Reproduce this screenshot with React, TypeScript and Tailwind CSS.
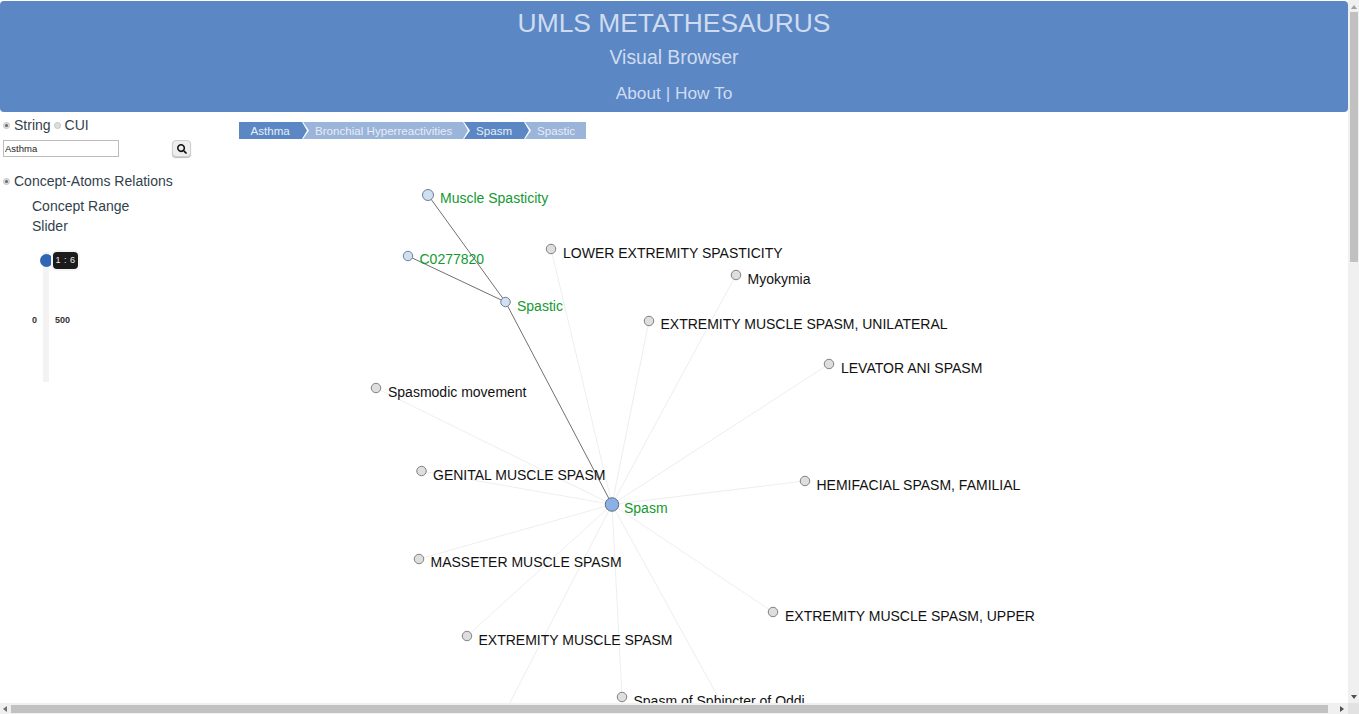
import React from "react";
import { FaSearch } from "react-icons/fa";

// graph data, coordinates are page pixels (svg viewBox lines up with the page)
const HUB = { x: 612, y: 504.5 };

type GraphNode = { label: string; x: number; y: number; tx: number; ty: number; picked?: boolean };

const nodes: GraphNode[] = [
  { label: "Muscle Spasticity", x: 428, y: 195, tx: 440, ty: 203, picked: true },
  { label: "C0277820", x: 408, y: 256, tx: 419.5, ty: 264, picked: true },
  { label: "Spastic", x: 505.5, y: 302, tx: 517, ty: 311, picked: true },
  { label: "LOWER EXTREMITY SPASTICITY", x: 551, y: 249, tx: 563, ty: 258 },
  { label: "Myokymia", x: 736, y: 275, tx: 747.5, ty: 284 },
  { label: "EXTREMITY MUSCLE SPASM, UNILATERAL", x: 649, y: 321, tx: 660.5, ty: 329 },
  { label: "LEVATOR ANI SPASM", x: 829, y: 364, tx: 841, ty: 373 },
  { label: "Spasmodic movement", x: 376, y: 388, tx: 388, ty: 397 },
  { label: "GENITAL MUSCLE SPASM", x: 421.5, y: 471, tx: 433, ty: 480 },
  { label: "HEMIFACIAL SPASM, FAMILIAL", x: 805, y: 481, tx: 816.5, ty: 490 },
  { label: "MASSETER MUSCLE SPASM", x: 419, y: 559, tx: 430.5, ty: 567 },
  { label: "EXTREMITY MUSCLE SPASM, UPPER", x: 773, y: 612, tx: 785, ty: 621 },
  { label: "EXTREMITY MUSCLE SPASM", x: 467, y: 636, tx: 478.5, ty: 645 },
  { label: "Spasm of Sphincter of Oddi", x: 622, y: 697, tx: 633.5, ty: 706 },
];

// spokes that run off the bottom of the canvas
const offscreen = [
  { x: 499, y: 724 },
  { x: 733, y: 724 },
];

function Radio({ dim }: { dim?: boolean }) {
  return (
    <span className="flex h-[7px] w-[7px] items-center justify-center rounded-full border border-[#c4c4c4] bg-[#dedede]">
      {!dim && <span className="h-[3px] w-[3px] rounded-full bg-[#666666]" />}
    </span>
  );
}

function Sidebar() {
  return (
    <aside className="w-[239px] shrink-0 text-[14px] text-[#333f4d]">
      <div className="flex h-[26px] items-center pl-[3px]">
        <Radio />
        <span className="ml-1">String</span>
        <span className="ml-[3px]">
          <Radio dim />
        </span>
        <span className="ml-1">CUI</span>
      </div>
      <div className="mt-[2px] flex items-center pl-[3px]">
        <input
          readOnly
          value="Asthma"
          className="h-[17px] w-[116px] border border-[#bdbdbd] bg-white px-px text-[9.5px] text-[#222222] outline-none"
        />
        <button className="ml-[53px] flex h-[17px] w-[19px] items-center justify-center rounded-sm border border-[#cfcfcf] bg-[#eeeeee] shadow-[0_1px_1px_#bbbbbb]">
          <FaSearch className="h-[10px] w-[10px] text-[#111111]" />
        </button>
      </div>
      <div className="mt-[14px] flex h-[20px] items-center pl-[3px]">
        <Radio />
        <span className="ml-1">Concept-Atoms Relations</span>
      </div>
      <div className="mt-[5px] pl-8 leading-[20px]">
        <div>Concept Range</div>
        <div>Slider</div>
      </div>
      <div className="mt-[16px] flex h-[130px] w-[80px] items-center pl-[32px] text-[9px] font-bold text-[#333333]">
        <span className="mt-[8px] w-[11px]">0</span>
        <div className="relative h-full w-[6px] bg-[#f3f3f3]">
          <span className="absolute left-[-3px] top-[2px] h-[13px] w-[13px] rounded-full bg-[#2e66b4]" />
          <span className="absolute left-[10px] top-0 flex h-[17px] w-[25px] items-center justify-center rounded-sm bg-[#1b1b1b] text-[9px] font-normal tracking-[0.5px] text-[#e8e8e8] shadow-[0_0_0_2px_#f4f4f4]">
            1 : 6
          </span>
        </div>
        <span className="ml-[6px] mt-[8px]">500</span>
      </div>
    </aside>
  );
}

function Breadcrumb() {
  return (
    <div className="flex h-[17px] text-[11.6px] leading-[18px] text-[#e6edf7]">
      <span className="w-[68px] bg-[#5b87c5] pl-[11.5px] [clip-path:polygon(0_0,calc(100%-5px)_0,100%_50%,calc(100%-5px)_100%,0_100%)]">
        Asthma
      </span>
      <span className="ml-[-4px] w-[165px] bg-[#9bb4d9] pl-3 [clip-path:polygon(0_0,calc(100%-5px)_0,100%_50%,calc(100%-5px)_100%,0_100%,6px_50%)]">
        Bronchial Hyperreactivities
      </span>
      <span className="ml-[-4px] w-[65px] bg-[#5b87c5] pl-3 [clip-path:polygon(0_0,calc(100%-5px)_0,100%_50%,calc(100%-5px)_100%,0_100%,6px_50%)]">
        Spasm
      </span>
      <span className="ml-[-4px] w-[61px] bg-[#9bb4d9] pl-3 [clip-path:polygon(0_0,100%_0,100%_100%,0_100%,6px_50%)]">
        Spastic
      </span>
    </div>
  );
}

function Graph() {
  const spastic = nodes[2];
  return (
    <svg width={1109} height={564} viewBox="239 139 1109 564" className="block">
      <g stroke="#eeeeee" strokeWidth={1}>
        {nodes.slice(3).map((n) => (
          <line key={n.label} x1={HUB.x} y1={HUB.y} x2={n.x} y2={n.y} />
        ))}
        {offscreen.map((p) => (
          <line key={p.x} x1={HUB.x} y1={HUB.y} x2={p.x} y2={p.y} />
        ))}
      </g>
      <g stroke="#707070" strokeWidth={1}>
        <line x1={HUB.x} y1={HUB.y} x2={spastic.x} y2={spastic.y} />
        <line x1={spastic.x} y1={spastic.y} x2={428} y2={195} />
        <line x1={spastic.x} y1={spastic.y} x2={408} y2={256} />
      </g>
      {nodes.map((n) => (
        <g key={n.label}>
          <circle
            cx={n.x}
            cy={n.y}
            r={n.label === "Muscle Spasticity" ? 5.5 : 4.75}
            fill={n.picked ? "#cfe0f2" : "#dedede"}
            stroke={n.picked ? "#6f7f94" : "#808080"}
            strokeWidth={1}
          />
          <text x={n.tx} y={n.ty} fontSize={14} fill={n.picked ? "#129a2f" : "#111111"}>
            {n.label}
          </text>
        </g>
      ))}
      <circle cx={HUB.x} cy={HUB.y} r={6.75} fill="#8cb0e3" stroke="#5d7088" strokeWidth={1} />
      <text x={624} y={513} fontSize={14} fill="#129a2f">
        Spasm
      </text>
    </svg>
  );
}

export default function App() {
  return (
    <div className="flex h-screen w-full flex-col overflow-hidden bg-white font-['Liberation_Sans',sans-serif]">
      <div className="flex min-h-0 flex-1">
        <main className="flex min-w-0 flex-1 flex-col overflow-hidden">
          <header className="mt-px flex h-[111px] shrink-0 flex-col items-center rounded-[4px] bg-[#5b87c5] text-[#cfdcf0]">
            <h1 className="mt-[5px] text-[26.4px] leading-[34px]">UMLS METATHESAURUS</h1>
            <p className="mt-[4px] text-[19.4px] leading-[26px]">Visual Browser</p>
            <p className="mt-[10px] text-[17.3px] leading-[26px]">About | How To</p>
          </header>
          <div className="flex min-h-0 flex-1">
            <Sidebar />
            <div className="min-w-0 flex-1 pt-[10px]">
              <Breadcrumb />
              <Graph />
            </div>
          </div>
        </main>
        {/* fake vertical scrollbar */}
        <div className="flex w-[11px] shrink-0 flex-col items-center bg-[#f0f0f0]">
          <span className="mt-[5px] h-0 w-0 border-x-[3px] border-b-[4px] border-x-transparent border-b-[#a0a0a0]" />
          <span className="mt-[3px] h-[250px] w-[8px] bg-[#c1c1c1]" />
          <span className="mt-auto mb-[4px] h-0 w-0 border-x-[3px] border-t-[4px] border-x-transparent border-t-[#505050]" />
        </div>
      </div>
      {/* fake horizontal scrollbar */}
      <div className="flex h-[11px] shrink-0 items-center bg-[#f0f0f0]">
        <span className="ml-[3px] h-0 w-0 border-y-[3px] border-r-[4px] border-y-transparent border-r-[#707070]" />
        <span className="ml-[4px] h-[8px] w-[1317px] bg-[#c1c1c1]" />
        <span className="ml-[12px] h-0 w-0 border-y-[3px] border-l-[4px] border-y-transparent border-l-[#505050]" />
        <span className="ml-auto h-full w-[11px] bg-[#e2e2e2]" />
      </div>
    </div>
  );
}
